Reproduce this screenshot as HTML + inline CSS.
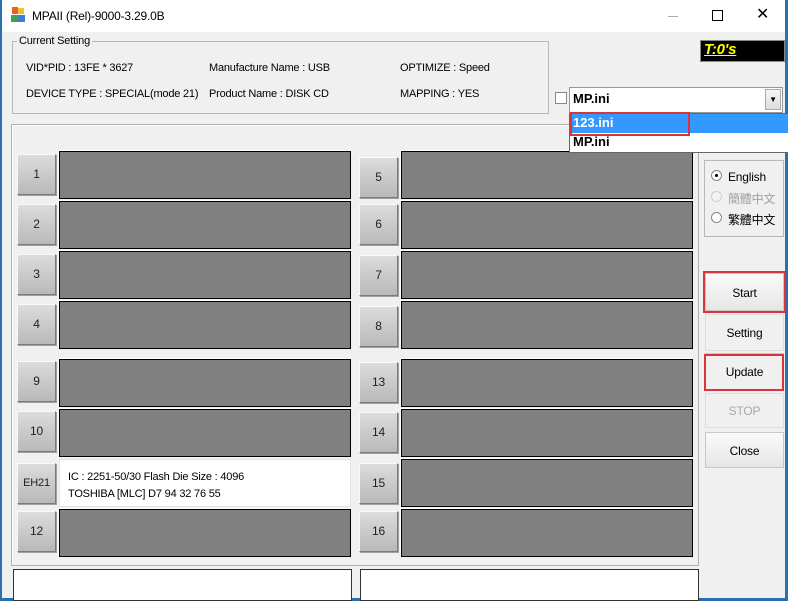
<!DOCTYPE html>
<html><head><meta charset="utf-8"><style>
*{margin:0;padding:0;box-sizing:border-box}
body{width:788px;height:598px;overflow:hidden;background:#2a6fb0;font-family:"Liberation Sans","Noto Sans CJK TC",sans-serif;font-size:11px;letter-spacing:-0.2px;color:#000;position:relative}
.a{position:absolute}
#win{left:2px;top:0;width:783px;height:598px;background:#f0f0f0}
#title{left:2px;top:0;width:783px;height:32px;background:#fff}
.btn{position:absolute;width:39px;height:41px;background:linear-gradient(#dcdcdc,#b9b9b9);border:1px solid;border-color:#fafafa #7a7a7a #7a7a7a #fafafa;box-shadow:1px 1px 0 #a0a0a0;text-align:center;line-height:39px;font-size:12px;color:#222}
.slot{position:absolute;width:292px;height:48px;background:#808080;border:1px solid #000;box-shadow:-1px -1px 0 #fff}
.rb{position:absolute;left:705px;width:79px;background:linear-gradient(#fafafa,#e6e6e6);border:1px solid #c8c8c8;text-align:center;font-size:12px}
.red{position:absolute;border:2px solid #d9343a}
</style></head><body>
<div id="win" class="a"></div>
<div id="title" class="a"></div>
<div class="a" style="left:10px;top:7px;width:16px;height:16px">
<div class="a" style="left:2px;top:0;width:6px;height:7px;background:#e8602c"></div>
<div class="a" style="left:8px;top:1px;width:6px;height:6px;background:#f3c02a"></div>
<div class="a" style="left:1px;top:8px;width:7px;height:7px;background:#3aa54a"></div>
<div class="a" style="left:8px;top:8px;width:7px;height:7px;background:#3b7fd1"></div>
</div>
<div class="a" style="left:32px;top:9px;font-size:12px">MPAII (Rel)-9000-3.29.0B</div>
<div class="a" style="left:668px;top:16px;width:10px;height:1px;background:#aaa"></div>
<div class="a" style="left:712px;top:10px;width:11px;height:11px;border:1px solid #000"></div>
<div class="a" style="left:756px;top:6px;font-size:16px;line-height:18px">✕</div>

<div class="a" style="left:12px;top:41px;width:537px;height:73px;border:1px solid #b8b8b8"></div>
<div class="a" style="left:17px;top:35px;background:#f0f0f0;padding:0 2px">Current Setting</div>
<div class="a" style="left:26px;top:62px">VID*PID : 13FE * 3627</div>
<div class="a" style="left:26px;top:88px">DEVICE TYPE : SPECIAL(mode 21)</div>
<div class="a" style="left:209px;top:62px">Manufacture Name : USB</div>
<div class="a" style="left:209px;top:88px">Product Name : DISK CD</div>
<div class="a" style="left:400px;top:62px">OPTIMIZE : Speed</div>
<div class="a" style="left:400px;top:88px">MAPPING : YES</div>

<div class="a" style="left:700px;top:40px;width:85px;height:22px;background:#000;border:1px solid #888"></div>
<div class="a" style="left:704px;top:41px;color:#ffff00;font-weight:bold;font-style:italic;font-size:15px;text-decoration:underline">T:0's</div>

<div class="a" style="left:11px;top:124px;width:688px;height:442px;border:1px solid #b0b0b0;box-shadow:inset 1px 1px 0 #fff"></div>

<div class="btn" style="left:17px;top:154px">1</div><div class="slot" style="left:59px;top:151px"></div>
<div class="btn" style="left:17px;top:204px">2</div><div class="slot" style="left:59px;top:201px"></div>
<div class="btn" style="left:17px;top:254px">3</div><div class="slot" style="left:59px;top:251px"></div>
<div class="btn" style="left:17px;top:304px">4</div><div class="slot" style="left:59px;top:301px"></div>
<div class="btn" style="left:17px;top:361px">9</div><div class="slot" style="left:59px;top:359px"></div>
<div class="btn" style="left:17px;top:411px">10</div><div class="slot" style="left:59px;top:409px"></div>
<div class="btn" style="left:17px;top:463px;font-size:11px">EH21</div>
<div class="a" style="left:59px;top:459px;width:292px;height:48px;background:#fff;border:1px solid #e4e4e4"></div>
<div class="a" style="left:68px;top:471px">IC : 2251-50/30 Flash Die Size : 4096</div>
<div class="a" style="left:68px;top:488px">TOSHIBA [MLC] D7 94 32 76 55</div>
<div class="btn" style="left:17px;top:511px">12</div><div class="slot" style="left:59px;top:509px"></div>

<div class="btn" style="left:359px;top:157px">5</div><div class="slot" style="left:401px;top:151px"></div>
<div class="btn" style="left:359px;top:204px">6</div><div class="slot" style="left:401px;top:201px"></div>
<div class="btn" style="left:359px;top:255px">7</div><div class="slot" style="left:401px;top:251px"></div>
<div class="btn" style="left:359px;top:306px">8</div><div class="slot" style="left:401px;top:301px"></div>
<div class="btn" style="left:359px;top:362px">13</div><div class="slot" style="left:401px;top:359px"></div>
<div class="btn" style="left:359px;top:412px">14</div><div class="slot" style="left:401px;top:409px"></div>
<div class="btn" style="left:359px;top:463px">15</div><div class="slot" style="left:401px;top:459px"></div>
<div class="btn" style="left:359px;top:511px">16</div><div class="slot" style="left:401px;top:509px"></div>

<div class="a" style="left:13px;top:569px;width:339px;height:32px;background:#fff;border:1px solid #333"></div>
<div class="a" style="left:360px;top:569px;width:339px;height:32px;background:#fff;border:1px solid #333"></div>

<div class="a" style="left:704px;top:160px;width:80px;height:77px;border:1px solid #b8b8b8"></div>
<div class="a" style="left:711px;top:170px;width:11px;height:11px;border-radius:50%;border:1px solid #888;background:#fff"><div class="a" style="left:3px;top:3px;width:3px;height:3px;border-radius:50%;background:#000"></div></div>
<div class="a" style="left:728px;top:170px;font-size:12px">English</div>
<div class="a" style="left:711px;top:191px;width:11px;height:11px;border-radius:50%;border:1px solid #ccc;background:#f4f4f4"></div>
<div class="a" style="left:728px;top:190px;color:#a0a0a0;font-size:12px">簡體中文</div>
<div class="a" style="left:711px;top:212px;width:11px;height:11px;border-radius:50%;border:1px solid #888;background:#fff"></div>
<div class="a" style="left:728px;top:211px;font-size:12px">繁體中文</div>

<div class="rb" style="top:273px;height:38px;line-height:38px">Start</div>
<div class="red" style="left:703px;top:271px;width:83px;height:42px"></div>
<div class="rb" style="top:314px;height:37px;line-height:37px;background:#f0f0f0;border-color:#ddd">Setting</div>
<div class="rb" style="top:353px;height:37px;line-height:37px;background:#f0f0f0">Update</div>
<div class="red" style="left:704px;top:354px;width:80px;height:37px"></div>
<div class="rb" style="top:393px;height:35px;line-height:35px;background:#f0f0f0;border-color:#ddd;color:#a8a8a8">STOP</div>
<div class="rb" style="top:432px;height:36px;line-height:36px">Close</div>

<div class="a" style="left:555px;top:92px;width:12px;height:12px;border:1px solid #888;background:#fff"></div>
<div class="a" style="left:569px;top:87px;width:214px;height:26px;background:#fff;border:1px solid #999"></div>
<div class="a" style="left:573px;top:91px;font-weight:bold;font-size:13px;letter-spacing:0">MP.ini</div>
<div class="a" style="left:765px;top:89px;width:16px;height:21px;background:linear-gradient(#f6f6f6,#ddd);border:1px solid #aaa;font-size:8px;text-align:center;line-height:20px">▼</div>
<div class="a" style="left:569px;top:113px;width:219px;height:40px;background:#fff;border:1px solid #666;border-right:none"></div>
<div class="a" style="left:570px;top:114px;width:218px;height:19px;background:#3399ff"></div>
<div class="a" style="left:573px;top:115px;font-weight:bold;font-size:13px;color:#fff;letter-spacing:0">123.ini</div>
<div class="a" style="left:573px;top:134px;font-weight:bold;font-size:13px;letter-spacing:0">MP.ini</div>
<div class="red" style="left:570px;top:112px;width:120px;height:24px"></div>
</body></html>
